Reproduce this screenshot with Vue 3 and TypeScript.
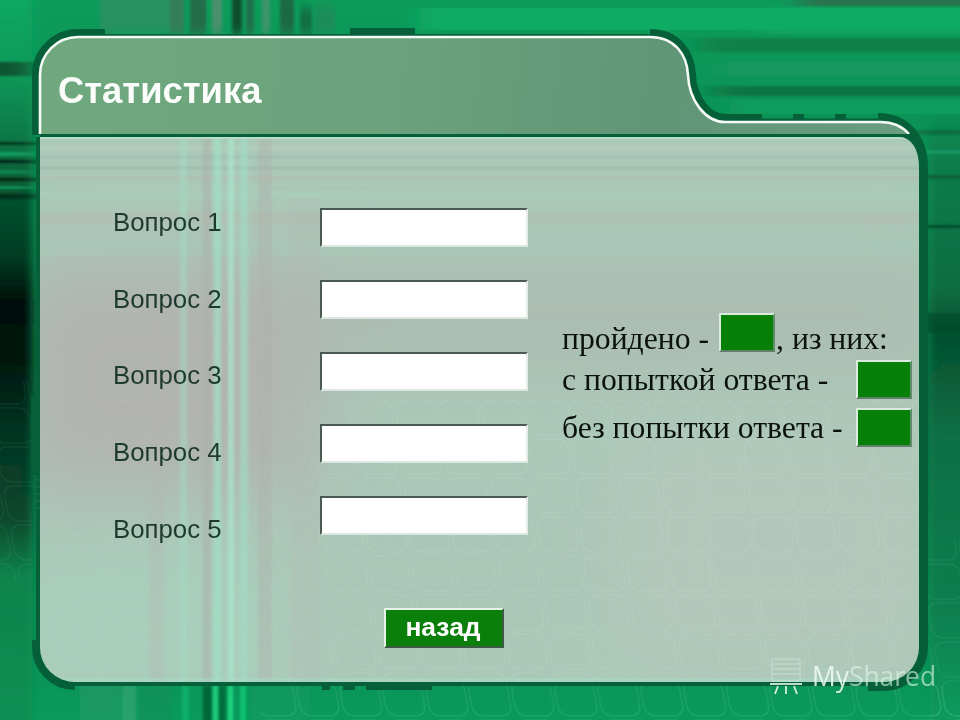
<script setup lang="ts">
interface Streak { x: number; y: number; w: number; h: number; c: string; o: number }

const questions = ['Вопрос 1', 'Вопрос 2', 'Вопрос 3', 'Вопрос 4', 'Вопрос 5']

const backdrop: Streak[] = [
  { x: 420, y: 8, w: 600, h: 22, c: '#0cb066', o: 0.8 },
  { x: 800, y: -4, w: 200, h: 10, c: '#2f6f4c', o: 0.9 },
  { x: 700, y: 38, w: 320, h: 14, c: '#0a7c46', o: 0.8 },
  { x: 720, y: 62, w: 300, h: 14, c: '#1a9a68', o: 0.6 },
  { x: 715, y: 86, w: 300, h: 10, c: '#0a7040', o: 0.85 },
  { x: 730, y: 100, w: 300, h: 14, c: '#10a060', o: 0.8 },
  { x: 760, y: 28, w: 260, h: 6, c: '#14a868', o: 0.6 },
  { x: 915, y: 130, w: 60, h: 5, c: '#0a6a40', o: 0.9 },
  { x: 915, y: 150, w: 60, h: 4, c: '#18a070', o: 0.7 },
  { x: 915, y: 175, w: 60, h: 4, c: '#0a5c38', o: 0.9 },
  { x: 915, y: 225, w: 60, h: 3, c: '#064a2c', o: 0.95 },
  { x: 915, y: 313, w: 60, h: 20, c: '#04482a', o: 0.7 },
  { x: -20, y: 62, w: 50, h: 14, c: '#08462c', o: 0.85 },
  { x: -20, y: 142, w: 54, h: 3, c: '#022c1a', o: 0.9 },
  { x: -20, y: 152, w: 54, h: 4, c: '#10a868', o: 0.9 },
  { x: -20, y: 160, w: 54, h: 3, c: '#021c10', o: 0.95 },
  { x: -20, y: 170, w: 54, h: 4, c: '#0e8a56', o: 0.9 },
  { x: -20, y: 178, w: 54, h: 3, c: '#021c10', o: 0.95 },
  { x: -20, y: 186, w: 54, h: 3, c: '#0d9c5e', o: 0.9 },
  { x: -20, y: 194, w: 54, h: 5, c: '#032a18', o: 0.9 }
]

const topStreaks: Streak[] = [
  { x: 100, y: -10, w: 70, h: 44, c: '#3f8a66', o: 0.5 },
  { x: 170, y: -10, w: 14, h: 44, c: '#4d6b58', o: 0.65 },
  { x: 190, y: -10, w: 16, h: 44, c: '#2c5a42', o: 0.7 },
  { x: 212, y: -10, w: 10, h: 44, c: '#6d8a78', o: 0.65 },
  { x: 232, y: -10, w: 10, h: 44, c: '#123c28', o: 0.8 },
  { x: 246, y: -10, w: 8, h: 44, c: '#2d5a44', o: 0.65 },
  { x: 262, y: -10, w: 8, h: 44, c: '#66907a', o: 0.55 },
  { x: 280, y: -10, w: 14, h: 44, c: '#274f3a', o: 0.65 },
  { x: 300, y: 8, w: 12, h: 26, c: '#1a4a32', o: 0.55 },
  { x: 315, y: 5, w: 20, h: 29, c: '#2f7a55', o: 0.4 }
]

const bottomStreaks: Streak[] = [
  { x: 80, y: 680, w: 40, h: 50, c: '#2d9a6c', o: 0.5 },
  { x: 122, y: 680, w: 14, h: 50, c: '#5ab08c', o: 0.4 },
  { x: 140, y: 680, w: 30, h: 50, c: '#1a8d5c', o: 0.55 },
  { x: 182, y: 680, w: 7, h: 50, c: '#12b46a', o: 0.85 },
  { x: 203, y: 680, w: 9, h: 50, c: '#045f34', o: 0.9 },
  { x: 213, y: 680, w: 5, h: 50, c: '#1ad27e', o: 0.95 },
  { x: 218, y: 680, w: 8, h: 50, c: '#06693a', o: 0.9 },
  { x: 228, y: 680, w: 5, h: 50, c: '#1ad880', o: 0.95 },
  { x: 240, y: 680, w: 6, h: 50, c: '#12c472', o: 0.95 },
  { x: 250, y: 680, w: 60, h: 50, c: '#1d9a68', o: 0.4 }
]

const panelZones: Streak[] = [
  { x: 10, y: 262, w: 300, h: 230, c: '#b3aeac', o: 0.8 },
  { x: 300, y: 260, w: 650, h: 110, c: '#adb6ae', o: 0.7 },
  { x: 10, y: 560, w: 260, h: 140, c: '#a8d4c0', o: 0.5 },
  { x: 620, y: 430, w: 320, h: 230, c: '#b7c6bc', o: 0.6 },
  { x: 300, y: 440, w: 300, h: 200, c: '#a9c4b6', o: 0.4 }
]

const panelLines: Streak[] = [
  { x: 20, y: 145, w: 920, h: 5, c: '#c2d0c4', o: 0.35 },
  { x: 20, y: 156, w: 920, h: 2, c: '#8fa89c', o: 0.4 },
  { x: 20, y: 167, w: 920, h: 2, c: '#8c9f98', o: 0.45 },
  { x: 20, y: 176, w: 920, h: 5, c: '#b8bab2', o: 0.4 },
  { x: 20, y: 190, w: 920, h: 8, c: '#a8d0bc', o: 0.55 },
  { x: 20, y: 212, w: 920, h: 12, c: '#b4b8b0', o: 0.4 },
  { x: 20, y: 238, w: 920, h: 18, c: '#a6cbb9', o: 0.4 }
]

const panelBars: Streak[] = [
  { x: 180, y: 130, w: 7, h: 560, c: '#a2dcc4', o: 0.5 },
  { x: 203, y: 130, w: 8, h: 560, c: '#aab0aa', o: 0.55 },
  { x: 214, y: 130, w: 7, h: 560, c: '#a0dfc6', o: 0.7 },
  { x: 228, y: 130, w: 6, h: 560, c: '#a8e4cc', o: 0.75 },
  { x: 240, y: 130, w: 8, h: 560, c: '#a0dcc4', o: 0.65 },
  { x: 258, y: 130, w: 14, h: 560, c: '#b0aeaa', o: 0.4 },
  { x: 150, y: 300, w: 14, h: 390, c: '#b4b4b0', o: 0.3 },
  { x: 290, y: 200, w: 30, h: 490, c: '#b2b4ae', o: 0.2 }
]
</script>

<template>
  <main class="stage">
    <svg class="art" viewBox="0 0 960 720" width="960" height="720" aria-hidden="true">
      <defs>
        <linearGradient id="base" x1="0" y1="0" x2="0" y2="1">
          <stop offset="0" stop-color="#0d9c5a" />
          <stop offset="0.3" stop-color="#0b8a50" />
          <stop offset="0.55" stop-color="#0a7547" />
          <stop offset="0.85" stop-color="#0c8c54" />
          <stop offset="1" stop-color="#0a9a5a" />
        </linearGradient>
        <linearGradient id="left" x1="0" y1="0" x2="0" y2="720" gradientUnits="userSpaceOnUse">
          <stop offset="0" stop-color="#0ba862" />
          <stop offset="0.1" stop-color="#0b9a58" />
          <stop offset="0.18" stop-color="#0a7c48" />
          <stop offset="0.28" stop-color="#06502f" />
          <stop offset="0.36" stop-color="#053a22" />
          <stop offset="0.42" stop-color="#010e08" />
          <stop offset="0.5" stop-color="#02170e" />
          <stop offset="0.6" stop-color="#063422" />
          <stop offset="0.72" stop-color="#07472d" />
          <stop offset="0.8" stop-color="#08844b" />
          <stop offset="1" stop-color="#0a8f52" />
        </linearGradient>
        <linearGradient id="right" x1="0" y1="0" x2="0" y2="720" gradientUnits="userSpaceOnUse">
          <stop offset="0.15" stop-color="#0c7d4c" stop-opacity="0" />
          <stop offset="0.22" stop-color="#0c7d4c" />
          <stop offset="0.4" stop-color="#0a6c42" />
          <stop offset="0.47" stop-color="#05502f" />
          <stop offset="0.6" stop-color="#0a6e45" />
          <stop offset="0.85" stop-color="#0c7f50" />
          <stop offset="1" stop-color="#0b9a5c" />
        </linearGradient>
        <linearGradient id="head" x1="40" y1="37" x2="900" y2="134" gradientUnits="userSpaceOnUse">
          <stop offset="0" stop-color="#70a87e" />
          <stop offset="0.4" stop-color="#6aa37c" />
          <stop offset="0.72" stop-color="#5f9676" />
          <stop offset="1" stop-color="#6a9c80" />
        </linearGradient>
        <linearGradient id="fadeL" x1="0" y1="0" x2="960" y2="0" gradientUnits="userSpaceOnUse">
          <stop offset="0" stop-color="#fff" stop-opacity="0.3" />
          <stop offset="0.25" stop-color="#fff" stop-opacity="0.3" />
          <stop offset="0.4" stop-color="#fff" />
          <stop offset="1" stop-color="#fff" />
        </linearGradient>
        <mask id="fade" maskUnits="userSpaceOnUse" x="0" y="0" width="960" height="720">
          <rect x="0" y="0" width="960" height="720" fill="url(#fadeL)" />
        </mask>
        <pattern id="cells" width="43" height="39" patternUnits="userSpaceOnUse" patternTransform="translate(8 8) skewX(6)">
          <rect x="2" y="2" width="39" height="35" rx="10" fill="none" stroke="#d8f2e6" stroke-width="1" />
        </pattern>
        <pattern id="cellsDark" width="43" height="39" patternUnits="userSpaceOnUse" patternTransform="translate(4 16) skewX(10)">
          <rect x="2" y="2" width="39" height="35" rx="10" fill="none" stroke="#8fe8c0" stroke-width="1" />
        </pattern>
        <clipPath id="panelClip">
          <path d="M40,137 H898 C912,137 919,150 919,168 V647 A35 35 0 0 1 884,682 H75 A35 35 0 0 1 40,647 Z" />
        </clipPath>
        <filter id="blurH" x="-20%" y="-5%" width="140%" height="110%">
          <feGaussianBlur stdDeviation="14 1.3" />
        </filter>
        <filter id="blurV" x="-5%" y="-20%" width="110%" height="140%">
          <feGaussianBlur stdDeviation="1.6 6" />
        </filter>
        <filter id="blurSide" x="-60%" y="-5%" width="220%" height="110%">
          <feGaussianBlur stdDeviation="5 2" />
        </filter>
        <filter id="blurWide" x="-30%" y="-30%" width="160%" height="160%">
          <feGaussianBlur stdDeviation="40" />
        </filter>
      </defs>

      <rect width="960" height="720" fill="url(#base)" />
      <g filter="url(#blurSide)">
        <rect x="-20" y="-10" width="52" height="740" fill="url(#left)" />
        <rect x="930" y="110" width="50" height="620" fill="url(#right)" />
      </g>
      <g filter="url(#blurH)">
        <rect v-for="(s, i) in backdrop" :key="'b' + i" :x="s.x" :y="s.y" :width="s.w" :height="s.h" :fill="s.c" :opacity="s.o" />
      </g>
      <g filter="url(#blurV)">
        <rect v-for="(s, i) in topStreaks" :key="'t' + i" :x="s.x" :y="s.y" :width="s.w" :height="s.h" :fill="s.c" :opacity="s.o" />
        <rect v-for="(s, i) in bottomStreaks" :key="'o' + i" :x="s.x" :y="s.y" :width="s.w" :height="s.h" :fill="s.c" :opacity="s.o" />
      </g>
      <rect x="0" y="380" width="32" height="200" fill="url(#cellsDark)" opacity="0.1" />
      <rect x="260" y="686" width="700" height="34" fill="url(#cellsDark)" opacity="0.2" />
      <rect x="928" y="540" width="32" height="180" fill="url(#cellsDark)" opacity="0.12" />

      <!-- dark backing of the folder -->
      <g fill="none" stroke="#05603a" stroke-width="16">
        <path d="M40,135 V75 A38 38 0 0 1 78,37 H105" />
        <path d="M350,36 H415" />
        <path d="M650,37 C675,37 687,55 688,75 C689,100 705,122 725,122 H762" />
        <path d="M793,122 H804 M835,122 H846" />
        <path d="M878,122 C900,122 919,137 919,168 V647 A35 35 0 0 1 884,682 H868" stroke-width="18" />
        <path d="M40,640 V647 A35 35 0 0 0 75,682" />
        <path d="M36,397 V475" stroke-width="10" />
        <path d="M322,682 H330 M343,682 H355 M366,682 H432" />
      </g>
      <g fill="none" stroke="#07603a">
        <path d="M75,35.5 H650" stroke-width="3" />
        <path d="M762,120 H880" stroke-width="3" />
        <path d="M38,137 V650" stroke-width="4" />
        <path d="M75,684 H885" stroke-width="4" />
      </g>
      <path d="M33,480 h7 M33,487 h7 M33,494 h7 M33,501 h7 M33,508 h7" stroke="#0b6c42" stroke-width="2" />

      <!-- header tab -->
      <path d="M40,135 V75 A38 38 0 0 1 78,37 H650 C675,37 687,55 688,75 C689,100 705,122 725,122 H880 C892,122 902,126 909,135 Z" fill="url(#head)" />
      <path d="M40,134 V75 A38 38 0 0 1 78,37 H650 C675,37 687,55 688,75 C689,100 705,122 725,122 H880 C892,122 902,126 909,134" fill="none" stroke="#f4fbf6" stroke-width="2.6" />
      <rect x="40" y="134" width="872" height="3.4" fill="#07603a" />

      <!-- body panel -->
      <g clip-path="url(#panelClip)">
        <rect x="40" y="137" width="880" height="545" fill="#abc9b9" />
        <g filter="url(#blurWide)">
          <rect v-for="(s, i) in panelZones" :key="'z' + i" :x="s.x" :y="s.y" :width="s.w" :height="s.h" :fill="s.c" :opacity="s.o" />
        </g>
        <g filter="url(#blurH)">
          <rect v-for="(s, i) in panelLines" :key="'l' + i" :x="s.x" :y="s.y" :width="s.w" :height="s.h" :fill="s.c" :opacity="s.o" />
        </g>
        <g filter="url(#blurV)">
          <rect v-for="(s, i) in panelBars" :key="'p' + i" :x="s.x" :y="s.y" :width="s.w" :height="s.h" :fill="s.c" :opacity="s.o" />
        </g>
        <rect x="40" y="400" width="880" height="282" fill="url(#cells)" opacity="0.16" mask="url(#fade)" />
        <rect x="40" y="137" width="880" height="2" fill="#b9dccb" />
        <rect x="40" y="678" width="880" height="4" fill="#a8dcc6" opacity="0.5" />
      </g>
    </svg>

    <section class="folder">
      <header class="folder-head">
        <h1 class="title">Статистика</h1>
      </header>

      <div class="content">
        <div class="columns">
          <ul class="labels">
            <li v-for="q in questions" :key="q">{{ q }}</li>
          </ul>
          <div class="inputs">
            <div v-for="q in questions" :key="q" class="field"></div>
          </div>
          <div class="stats">
            <div class="stat first">
              <span class="stat-text">пройдено -</span>
              <span class="cell"></span>
              <span class="stat-text tail">, из них:</span>
            </div>
            <div class="stat spread second">
              <span class="stat-text">с попыткой ответа -</span>
              <span class="cell"></span>
            </div>
            <div class="stat spread">
              <span class="stat-text">без попытки ответа -</span>
              <span class="cell"></span>
            </div>
          </div>
        </div>
        <button class="back" type="button">назад</button>
      </div>
    </section>

    <div class="mark">
      <svg class="mark-icon" viewBox="0 0 34 38" width="34" height="38" aria-hidden="true">
        <g fill="none" stroke="#dff5ea" stroke-width="1.4" opacity="0.35">
          <rect x="3" y="2" width="28" height="22" rx="2" />
          <path d="M3,7 H31 M3,12 H31 M3,17 H31" />
        </g>
        <g fill="none" stroke="#eafaf2" stroke-width="1.8" opacity="0.9">
          <path d="M1,27 H33" />
          <path d="M9,29 L6,37 M17,29 V37 M25,29 L28,37" />
        </g>
      </svg>
      <span class="mark-text"><span class="my">My</span>Shared</span>
    </div>
  </main>
</template>

<style scoped>
.stage {
  position: relative;
  width: 960px;
  height: 720px;
  overflow: hidden;
  padding: 37px 0 0 40px;
  box-sizing: border-box;
  font-family: "Liberation Sans", Arial, sans-serif;
}
.art {
  position: absolute;
  left: 0;
  top: 0;
  display: block;
}
.folder {
  position: relative;
  width: 880px;
}
.folder-head {
  height: 100px;
  padding: 34px 0 0 18px;
  box-sizing: border-box;
}
.title {
  margin: 0;
  font-size: 36.4px;
  line-height: 40px;
  font-weight: 700;
  color: #fbfdfb;
}
.content {
  padding: 71px 0 0 73px;
}
.columns {
  display: flex;
  height: 400px;
}
.labels {
  width: 207px;
  margin: 0;
  padding: 1px 0 0;
  list-style: none;
  display: flex;
  flex-direction: column;
  gap: 49.7px;
  font-size: 25.8px;
  line-height: 27px;
  color: #1e3a30;
}
.inputs {
  display: flex;
  flex-direction: column;
  gap: 33px;
}
.field {
  width: 208px;
  height: 39px;
  box-sizing: border-box;
  background: #fff;
  border-style: solid;
  border-width: 2px;
  border-color: #4b5a52 #e4ece6 #dbe6df #4b5a52;
}
.stats {
  margin: 105px 0 0 34px;
  width: 350px;
  font-family: "Liberation Serif", "Times New Roman", serif;
  font-size: 31.7px;
  color: #0b120e;
}
.stat {
  display: flex;
  align-items: flex-start;
}
.first {
  height: 47px;
}
.second {
  margin-bottom: 9px;
}
.spread {
  justify-content: space-between;
}
.stat-text {
  line-height: 39px;
  white-space: nowrap;
}
.first .stat-text {
  margin-top: 6px;
}
.first .cell {
  margin-left: 10px;
}
.tail {
  margin-left: 1px;
}
.cell {
  width: 56px;
  height: 39px;
  flex: none;
  box-sizing: border-box;
  background: #078007;
  border-style: solid;
  border-width: 2px;
  border-color: #dcebdf #5e8d6c #5e8068 #dcebdf;
}
.back {
  display: block;
  width: 120px;
  height: 40px;
  margin: 0 0 0 271px;
  padding: 0 2px 2px 0;
  box-sizing: border-box;
  background: #0a800a;
  border-style: solid;
  border-width: 2px;
  border-color: #e6f2e8 #3d5a44 #3d5a44 #e6f2e8;
  font-family: "Liberation Sans", Arial, sans-serif;
  font-size: 26.4px;
  font-weight: 700;
  color: #fff;
}
.mark {
  position: absolute;
  left: 769px;
  top: 657px;
  display: flex;
  align-items: center;
  gap: 9px;
}
.mark-text {
  font-family: "Open Sans", "Noto Sans", sans-serif;
  font-size: 26.4px;
  line-height: 36px;
  color: rgba(222, 246, 234, 0.6);
}
.my {
  color: rgba(240, 252, 246, 0.85);
}
</style>

<style>
html, body {
  margin: 0;
  background: #0a8f52;
}
</style>
